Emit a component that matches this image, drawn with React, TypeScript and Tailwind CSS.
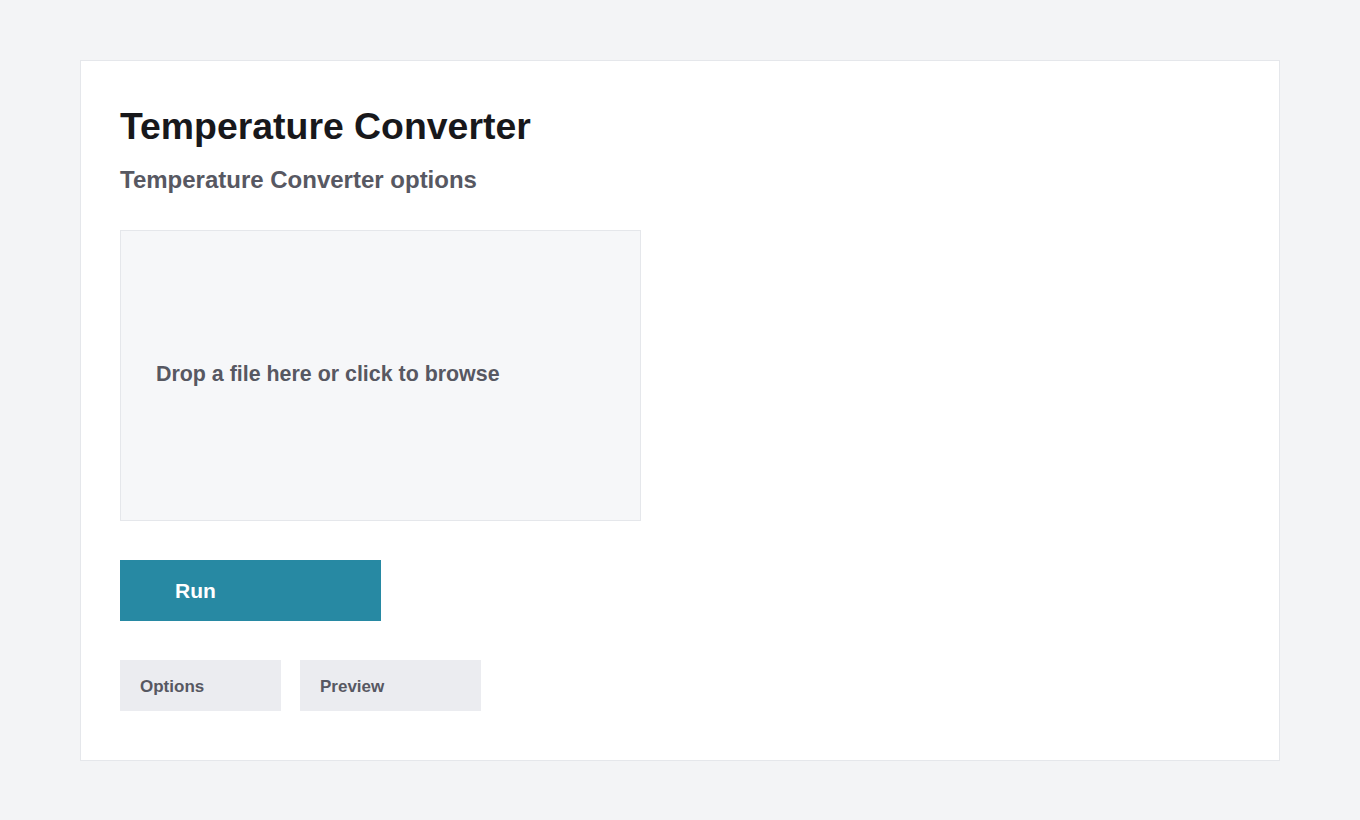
import React from "react";

const font = { fontFamily: '"Liberation Sans", Arial, sans-serif' };

function Tab({ label, width }: { label: string; width: string }) {
  return (
    <button
      className={`${width} h-[51px] bg-[#ebecf0] pl-5 pt-[2px] text-left text-[17px] font-bold text-[#575862]`}
    >
      {label}
    </button>
  );
}

export default function App() {
  return (
    <div
      className="min-h-screen bg-[#f3f4f6] px-20 py-[60px] flex"
      style={font}
    >
      <div className="flex-1 h-[701px] bg-white border border-[#e5e7eb] px-[39px] pt-[43px]">
        <h1 className="text-[37.4px] leading-[44px] font-bold text-[#18181b]">
          Temperature Converter
        </h1>
        <h2 className="mt-[17px] text-[24px] leading-[29px] font-bold text-[#575862]">
          Temperature Converter options
        </h2>

        <div className="mt-[36px] w-[521px] h-[291px] bg-[#f6f7f9] border border-[#e5e7eb] flex items-center pl-[35px] pb-[2px]">
          <span className="text-[21.4px] font-bold text-[#575862]">
            Drop a file here or click to browse
          </span>
        </div>

        <button className="mt-[39px] w-[261px] h-[61px] bg-[#2789a3] pl-[55px] text-left text-[21px] font-bold text-white">
          Run
        </button>

        <div className="mt-[39px] flex gap-[19px]">
          <Tab label="Options" width="w-[161px]" />
          <Tab label="Preview" width="w-[181px]" />
        </div>
      </div>
    </div>
  );
}
